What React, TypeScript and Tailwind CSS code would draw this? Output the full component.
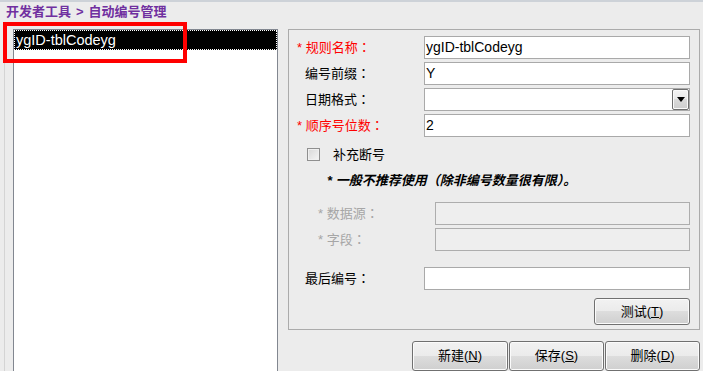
import React from 'react'

const inputBox = 'h-[23px] border border-[#a9a9a9] bg-white'

function Colon() {
  return <span className="font-['Noto_Sans_CJK_JP',sans-serif]">：</span>
}

function Field({ label, required, value, dropdown }: { label: string; required?: boolean; value?: string; dropdown?: boolean }) {
  return (
    <div className="flex h-[23px] items-center">
      <div className={required ? 'w-[135px] pl-[8px] text-[#ff0000]' : 'w-[135px] pl-[16px]'}>
        {required ? '* ' : ''}
        {label}
        <Colon />
      </div>
      <div className={`${inputBox} flex w-[266px] items-stretch`}>
        <div className="flex-1 pl-[1px] text-[14px] leading-[21px]">{value}</div>
        {dropdown && (
          <div className="flex w-[17px] items-center justify-center rounded-[2px] border border-[#6e6e6e] bg-[linear-gradient(to_bottom,#f4f4f4_0%,#e9e9e9_50%,#dadada_50%,#cdcdcd_100%)] shadow-[inset_0_0_0_1px_#fafafa]">
            <svg width="8" height="5" viewBox="0 0 8 5">
              <path d="M0 0h8L4 5z" fill="#000" />
            </svg>
          </div>
        )}
      </div>
    </div>
  )
}

function Disabled({ label }: { label: string }) {
  return (
    <div className="flex h-[23px] items-center">
      <div className="w-[146px] pl-[29px] text-[#a6a6a6]">
        * {label}
        <Colon />
      </div>
      <div className="h-[23px] w-[255px] border border-[#adadad] bg-[#eeeeee]" />
    </div>
  )
}

function Btn({ text, hot, className }: { text: string; hot: string; className?: string }) {
  return (
    <div
      className={`flex items-center justify-center rounded-[3px] border border-[#707070] bg-[linear-gradient(to_bottom,#f2f2f2_0%,#ebebeb_50%,#dddddd_50%,#cfcfcf_100%)] text-[13px] shadow-[inset_0_0_0_1px_#fbfbfb] ${className ?? ''}`}
    >
      {text}(<span className="underline">{hot}</span>)
    </div>
  )
}

export default function App() {
  return (
    <div className="relative h-[371px] w-[703px] overflow-hidden border-t-2 border-[#cdd2d8] bg-[#ececec] font-['Liberation_Sans','Noto_Sans_CJK_SC',sans-serif] text-[13px] text-black">
      <div className="h-[27px] pl-[6px] pt-[1px] text-[13px] font-bold leading-[18px] text-[#7030a0]">
        开发者工具<span className="mx-[5px]">&gt;</span>自动编号管理
      </div>

      <div className="flex h-[342px]">
        <div className="ml-[4px] border-l border-[#d4d4d4] pl-[8px]">
          <div className="h-[360px] w-[265px] border border-[#828790] bg-white">
            <div className="h-[20px] border border-dotted border-white bg-black pl-[1px] text-[14.5px] leading-[18px] text-white">
              ygID-tblCodeyg
            </div>
          </div>
        </div>

        <div className="ml-[10px] flex w-[412px] flex-col">
          <div className="flex h-[303px] flex-col border border-[#ababab] pr-[9px] pt-[6px]">
            <div className="flex flex-col gap-[3px]">
              <Field label="规则名称" required value="ygID-tblCodeyg" />
              <Field label="编号前缀" value="Y" />
              <Field label="日期格式" dropdown />
              <Field label="顺序号位数" required value="2" />
            </div>

            <div className="mt-[6px] flex h-[23px] items-center pl-[18px]">
              <div className="h-[13px] w-[13px] border border-[#8f8f8f] bg-[linear-gradient(135deg,#d8d8d8,#f5f5f5)] shadow-[inset_0_0_0_1px_#f0f0f0]" />
              <span className="ml-[13px]">补充断号</span>
            </div>

            <div className="mt-[3px] flex h-[23px] items-center pl-[38px] font-bold italic">
              * 一般不推荐使用（除非编号数量很有限）。
            </div>

            <div className="mt-[10px] flex flex-col gap-[3px]">
              <Disabled label="数据源" />
              <Disabled label="字段" />
            </div>

            <div className="mt-[16px]">
              <Field label="最后编号" />
            </div>

            <div className="mt-[8px] flex justify-end">
              <Btn text="测试" hot="T" className="h-[27px] w-[96px]" />
            </div>
          </div>

          <div className="mt-[11px] flex justify-end gap-[1px]">
            <Btn text="新建" hot="N" className="h-[30px] w-[96px]" />
            <Btn text="保存" hot="S" className="h-[30px] w-[95px]" />
            <Btn text="删除" hot="D" className="h-[30px] w-[95px]" />
          </div>
        </div>
      </div>

      <div className="absolute left-[3px] top-[20px] h-[41px] w-[184px] border-4 border-[#ff0000]" />
    </div>
  )
}
